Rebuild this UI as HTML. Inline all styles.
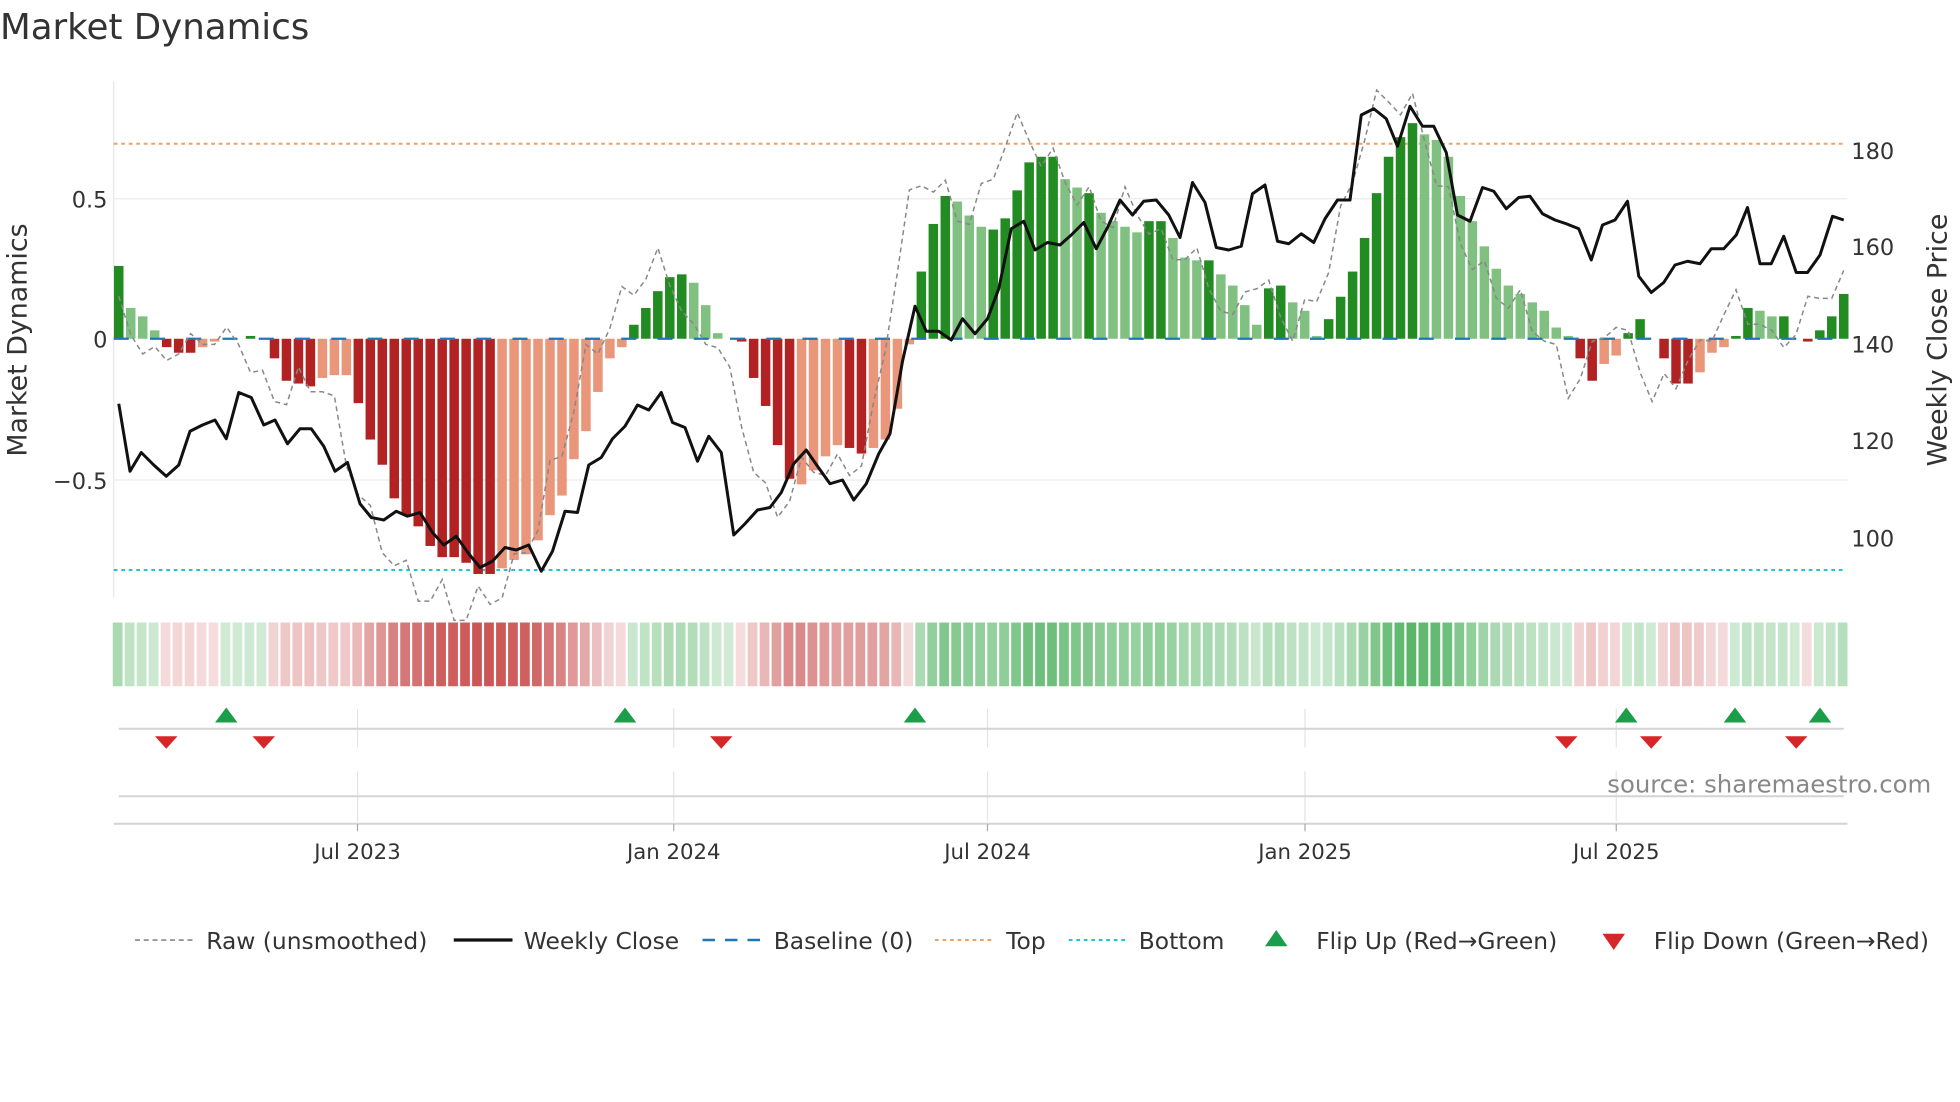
<!DOCTYPE html>
<html><head><meta charset="utf-8"><style>
html,body{margin:0;padding:0;background:#fff;width:1960px;height:1102px;overflow:hidden}
svg{display:block}
text{font-family:"DejaVu Sans","Liberation Sans",sans-serif}
</style></head><body>
<svg id="s" width="1960" height="1102" viewBox="0 0 1568 881.6" xmlns="http://www.w3.org/2000/svg">
<rect width="1568" height="882" fill="#fff"/>
<text x="0" y="31" font-size="28.5" fill="#333">Market Dynamics</text>
<line x1="91" y1="65" x2="91" y2="478" stroke="#e6e6e6" stroke-width="1"/>
<line x1="91" y1="159" x2="1478" y2="159" stroke="#ececec" stroke-width="1"/>
<line x1="91" y1="384" x2="1478" y2="384" stroke="#ececec" stroke-width="1"/>
<text x="86" y="166" font-size="18" fill="#333" text-anchor="end">0.5</text>
<text x="86" y="278" font-size="18" fill="#333" text-anchor="end">0</text>
<text x="86" y="391" font-size="18" fill="#333" text-anchor="end">−0.5</text>
<text x="1481" y="127" font-size="18" fill="#333">180</text>
<text x="1481" y="204" font-size="18" fill="#333">160</text>
<text x="1481" y="282" font-size="18" fill="#333">140</text>
<text x="1481" y="359" font-size="18" fill="#333">120</text>
<text x="1481" y="437" font-size="18" fill="#333">100</text>
<text transform="translate(21,272) rotate(-90)" font-size="21.5" fill="#333" text-anchor="middle">Market Dynamics</text>
<text transform="translate(1557,272) rotate(-90)" font-size="21.5" fill="#333" text-anchor="middle">Weekly Close Price</text>
<line x1="91" y1="115" x2="1475" y2="115" stroke="#f0a060" stroke-width="1.6" stroke-dasharray="3,3"/>
<line x1="91" y1="456" x2="1475" y2="456" stroke="#22c4d8" stroke-width="1.6" stroke-dasharray="3,3"/>
<g id="bars"></g>
<line x1="91" y1="271" x2="1475" y2="271" stroke="#1f77b4" stroke-width="1.8" stroke-dasharray="12,17"/>
<polyline id="raw" fill="none" stroke="#888" stroke-width="1.2" stroke-dasharray="4,3"/>
<polyline id="price" fill="none" stroke="#111" stroke-width="2.4" stroke-linejoin="round"/>
<g id="heat"></g>
<g stroke="#e4e4e4" stroke-width="1">
<line x1="286" y1="567" x2="286" y2="598"/><line x1="539" y1="567" x2="539" y2="598"/><line x1="790" y1="567" x2="790" y2="598"/><line x1="1044" y1="567" x2="1044" y2="598"/><line x1="1293" y1="567" x2="1293" y2="598"/>
<line x1="286" y1="617" x2="286" y2="657"/><line x1="539" y1="617" x2="539" y2="657"/><line x1="790" y1="617" x2="790" y2="657"/><line x1="1044" y1="617" x2="1044" y2="657"/><line x1="1293" y1="617" x2="1293" y2="657"/>
</g>
<line x1="95" y1="583" x2="1475" y2="583" stroke="#d4d4d4" stroke-width="1.6"/>
<line x1="95" y1="637" x2="1475" y2="637" stroke="#d4d4d4" stroke-width="1.6"/>
<line x1="91" y1="659" x2="1478" y2="659" stroke="#d4d4d4" stroke-width="1.6"/>
<g stroke="#aaa" stroke-width="1"><line x1="286" y1="659" x2="286" y2="665"/><line x1="539" y1="659" x2="539" y2="665"/><line x1="790" y1="659" x2="790" y2="665"/><line x1="1044" y1="659" x2="1044" y2="665"/><line x1="1293" y1="659" x2="1293" y2="665"/></g>
<g id="tri"></g>
<text x="1545" y="634" font-size="19.5" fill="#888" text-anchor="end">source: sharemaestro.com</text>
<g font-size="17" fill="#333" text-anchor="middle">
<text x="286" y="687">Jul 2023</text><text x="539" y="687">Jan 2024</text><text x="790" y="687">Jul 2024</text><text x="1044" y="687">Jan 2025</text><text x="1293" y="687">Jul 2025</text>
</g>
<g font-size="18.7" fill="#333">
<line x1="108" y1="752" x2="154" y2="752" stroke="#888" stroke-width="1.3" stroke-dasharray="4,3"/>
<text x="165" y="759">Raw (unsmoothed)</text>
<line x1="363" y1="752" x2="410" y2="752" stroke="#111" stroke-width="2.6"/>
<text x="419" y="759">Weekly Close</text>
<line x1="562" y1="752" x2="608" y2="752" stroke="#1f77b4" stroke-width="2" stroke-dasharray="10,8"/>
<text x="619" y="759">Baseline (0)</text>
<line x1="748" y1="752" x2="794" y2="752" stroke="#f0a060" stroke-width="1.6" stroke-dasharray="3,3"/>
<text x="805" y="759">Top</text>
<line x1="855" y1="752" x2="901" y2="752" stroke="#22c4d8" stroke-width="1.6" stroke-dasharray="3,3"/>
<text x="911" y="759">Bottom</text>
<polygon points="1012,757 1030,757 1021,744" fill="#1a9e4a"/>
<text x="1053" y="759">Flip Up (Red→Green)</text>
<polygon points="1282,747 1300,747 1291,760" fill="#d62728"/>
<text x="1323" y="759">Flip Down (Green→Red)</text>
</g>
</svg>
<script>
var V=[[.26,1],[.11,0],[.08,0],[.03,0],[-.03,1],[-.05,1],[-.05,1],[-.03,0],[-.01,0],[0,0],[0,0],[.01,1],[0,0],[-.07,1],[-.15,1],[-.16,1],[-.17,1],[-.14,0],[-.13,0],[-.13,0],[-.23,1],[-.36,1],[-.45,1],[-.57,1],[-.63,1],[-.67,1],[-.74,1],[-.78,1],[-.78,1],[-.8,1],[-.84,1],[-.84,1],[-.82,0],[-.79,0],[-.77,0],[-.72,0],[-.63,0],[-.56,0],[-.43,0],[-.33,0],[-.19,0],[-.07,0],[-.03,0],
[.05,1],[.11,1],[.17,1],[.22,1],[.23,1],[.2,0],[.12,0],[.02,0],[0,0],[-.01,1],[-.14,1],[-.24,1],[-.38,1],[-.5,1],[-.52,0],[-.47,0],[-.42,0],[-.38,0],[-.39,1],[-.41,1],[-.39,0],[-.36,0],[-.25,0],[-.02,0],
[.24,1],[.41,1],[.51,1],[.49,0],[.44,0],[.4,0],[.39,1],[.43,1],[.53,1],[.63,1],[.65,1],[.65,1],[.57,0],[.54,0],[.52,1],[.45,0],[.42,0],[.4,0],[.38,0],[.42,1],[.42,1],[.36,0],[.29,0],[.28,0],[.28,1],[.23,0],[.19,0],[.12,0],[.05,0],[.18,1],[.19,1],[.13,0],[.1,0],[.01,0],[.07,1],[.15,1],[.24,1],[.36,1],[.52,1],[.65,1],[.72,1],[.77,1],[.73,0],[.71,0],[.65,0],[.51,0],[.42,0],[.33,0],[.25,0],[.19,0],[.16,0],[.13,0],[.1,0],[.04,0],[.01,0],[-.07,1],[-.15,1],[-.09,0],[-.06,0],[.02,1],[.07,1],[0,0],[-.07,1],[-.16,1],[-.16,1],[-.12,0],[-.05,0],[-.03,0],[.01,1],[.11,1],[.1,0],[.08,0],[.08,1],[0,0],[-.01,1],[.03,1],[.08,1],[.16,1]];
var P=[[95,323],[104,377],[113,362],[123,372],[133,381],[143,372],[152,345],[162,340],[172,336],[181,351],[191,314],[201,318],[211,340],[220,336],[230,355],[240,343],[249,343],[259,357],[268,377],[278,370],[288,403],[297,414],[307,416],[317,409],[326,413],[336,410],[346,426],[355,436],[365,429],[375,443],[384,454],[394,449],[404,438],[413,440],[423,436],[433,457],[442,441],[452,409],[462,410],[471,372],[481,366],[490,351],[500,341],[510,324],[519,328],[529,314],[538,338],[548,342],[558,369],[567,349],[577,362],[587,428],[596,419],[606,408],[616,406],[625,394],[635,371],[645,360],[654,373],[664,387],[674,384],[683,400],[693,387],[703,363],[712,347],[722,289],[732,245],[741,265],[751,265],[761,272],[770,255],[780,267],[790,255],[799,231],[809,183],[819,177],[828,200],[838,194],[848,196],[857,188],[867,178],[877,199],[886,182],[896,160],[906,172],[915,161],[925,160],[935,172],[944,190],[954,146],[964,162],[973,198],[983,200],[993,197],[1002,155],[1012,148],[1022,193],[1031,195],[1041,187],[1051,194],[1060,175],[1070,160],[1080,160],[1089,92],[1099,87],[1109,95],[1118,117],[1128,85],[1138,101],[1147,101],[1157,122],[1166,172],[1176,177],[1186,150],[1195,153],[1205,167],[1215,158],[1224,157],[1234,171],[1244,176],[1253,179],[1263,183],[1273,208],[1282,180],[1292,176],[1302,161],[1311,221],[1321,234],[1331,226],[1340,212],[1350,209],[1360,211],[1369,199],[1379,199],[1389,188],[1398,166],[1408,211],[1417,211],[1427,189],[1437,218],[1446,218],[1456,204],[1466,173],[1475,176]];
var NS="http://www.w3.org/2000/svg";
function el(p,t,a){var e=document.createElementNS(NS,t);for(var k in a)e.setAttribute(k,a[k]);p.appendChild(e);return e;}
var n=V.length,x0=95,x1=1475,dx=(x1-x0)/(n-1),Z=271,S=224;
var bars=document.getElementById('bars'),heat=document.getElementById('heat');
var raw=[];
for(var i=0;i<n;i++){
 var v=V[i][0],d=V[i][1],x=x0+i*dx,h=Math.abs(v)*S;
 var c=v>=0?(d?'#228b22':'#80c080'):(d?'#b22222':'#e9967a');
 if(h>0.5)el(bars,'rect',{x:x-3.8,y:v>=0?Z-h:Z,width:7.6,height:h,fill:c});
 var m=Math.min(1,Math.abs(v)/0.85);
 var hc=v>=0?'rgba(40,160,60,'+(0.22+0.6*m)+')':'rgba(190,40,40,'+(0.15+0.65*m)+')';
 el(heat,'rect',{x:x-4.8,y:498,width:7.8,height:51,fill:hc});
 var j=Math.min(n-1,i+2),rv=V[j][0]*1.15+(i%3==0?0.06:-0.04)*(Math.abs(V[j][0])>0.05?1:0.5);
 raw.push(x.toFixed(1)+','+(Z-rv*S).toFixed(1));
}
document.getElementById('raw').setAttribute('points',raw.join(' '));
document.getElementById('price').setAttribute('points',P.map(function(p){return p.join(',')}).join(' '));
var tri=document.getElementById('tri');
[181,500,732,1301,1388,1456].forEach(function(x){el(tri,'polygon',{points:(x-9)+',578 '+(x+9)+',578 '+x+',566',fill:'#1a9e4a'});});
[133,211,577,1253,1321,1437].forEach(function(x){el(tri,'polygon',{points:(x-9)+',589 '+(x+9)+',589 '+x+',599',fill:'#d62728'});});
</script>
</body></html>
